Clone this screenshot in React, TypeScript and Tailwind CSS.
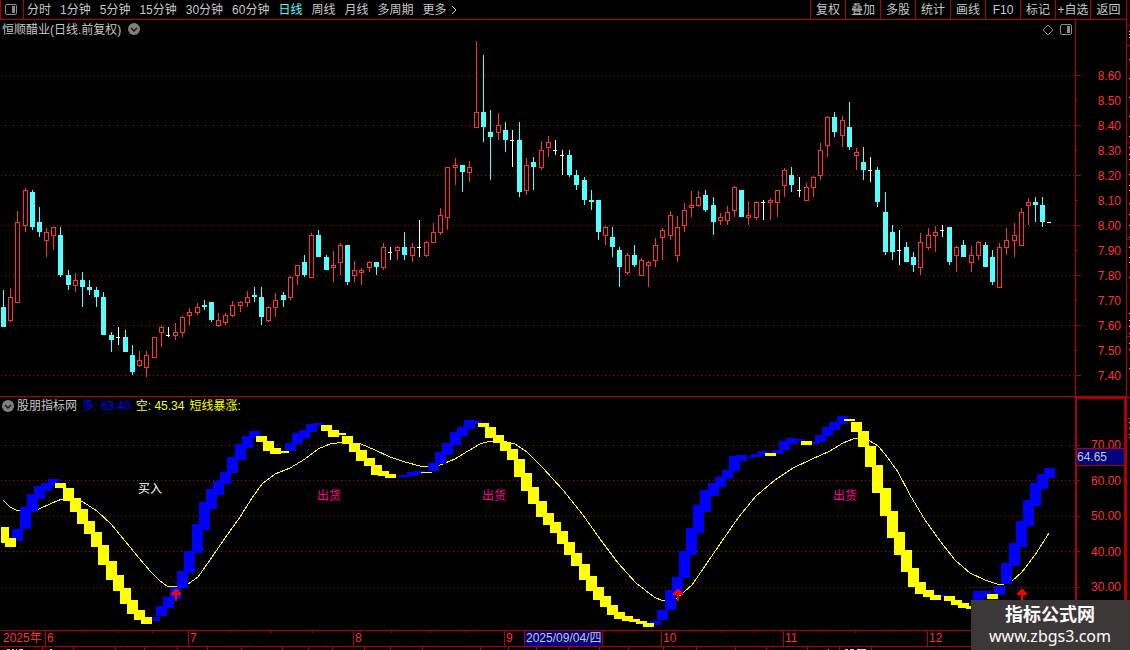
import React from "react";

type Candle = [kind: "r" | "c" | "w", high: number, top: number, bottom: number, low: number];
type Block = [color: "b" | "y", top: number, bottom: number];

const periods = ["分时", "1分钟", "5分钟", "15分钟", "30分钟", "60分钟", "日线", "周线", "月线", "多周期"];
const tools = ["复权", "叠加", "多股", "统计", "画线", "F10", "标记", "+自选", "返回"];
const prices = ["8.60", "8.50", "8.40", "8.30", "8.20", "8.10", "8.00", "7.90", "7.80", "7.70", "7.60", "7.50", "7.40"];
const levels = ["70.00", "60.00", "50.00", "40.00", "30.00"];

// r = hollow rising, c = filled falling, w = open equals close
const candles: Candle[] = [
  ["c", 290, 307, 327, 327], ["r", 288, 297, 321, 322], ["r", 211, 222, 303, 303], ["r", 188, 190, 226, 232],
  ["c", 190, 192, 227, 230], ["c", 207, 222, 232, 237], ["r", 228, 232, 241, 257], ["r", 227, 227, 236, 250],
  ["c", 227, 235, 275, 277], ["c", 270, 275, 285, 290], ["r", 273, 280, 286, 292], ["c", 272, 280, 287, 307],
  ["c", 280, 287, 290, 295], ["c", 287, 290, 297, 307], ["c", 292, 297, 335, 335], ["c", 332, 335, 340, 352],
  ["w", 327, 337, 338, 345], ["c", 330, 337, 352, 352], ["c", 345, 355, 372, 375], ["r", 351, 360, 366, 367],
  ["r", 351, 355, 368, 377], ["r", 337, 337, 358, 358], ["r", 326, 327, 333, 347], ["w", 327, 335, 336, 337],
  ["r", 323, 332, 336, 340], ["r", 316, 317, 333, 337], ["r", 308, 312, 316, 325], ["r", 303, 307, 313, 315],
  ["c", 300, 305, 307, 310], ["c", 302, 302, 320, 322], ["r", 313, 320, 326, 327], ["r", 313, 315, 323, 325],
  ["r", 301, 305, 316, 317], ["r", 301, 302, 306, 312], ["r", 291, 297, 303, 307], ["c", 287, 295, 297, 302],
  ["c", 287, 297, 317, 325], ["r", 306, 307, 321, 322], ["r", 293, 300, 308, 317], ["c", 292, 295, 300, 307],
  ["r", 276, 277, 298, 300], ["r", 265, 265, 276, 285], ["c", 255, 262, 275, 277], ["r", 233, 235, 278, 278],
  ["c", 230, 235, 257, 257], ["c", 255, 257, 270, 270], ["r", 251, 265, 268, 282], ["r", 243, 245, 263, 275],
  ["c", 245, 245, 282, 285], ["r", 261, 270, 276, 282], ["r", 268, 270, 273, 285], ["r", 261, 262, 268, 272],
  ["c", 262, 262, 267, 275], ["r", 243, 247, 268, 270], ["w", 247, 252, 253, 260], ["r", 246, 247, 251, 260],
  ["c", 232, 247, 255, 260], ["r", 243, 247, 256, 262], ["w", 220, 247, 248, 257], ["r", 241, 242, 256, 257],
  ["r", 223, 232, 243, 243], ["r", 208, 215, 233, 235], ["r", 167, 167, 218, 230], ["r", 158, 165, 168, 185],
  ["c", 165, 165, 172, 192], ["r", 161, 167, 173, 182], ["r", 41, 112, 128, 128], ["c", 55, 112, 127, 142],
  ["c", 110, 132, 137, 180], ["r", 113, 125, 133, 140], ["c", 122, 130, 140, 152], ["w", 130, 140, 141, 167],
  ["c", 122, 140, 192, 197], ["r", 158, 165, 191, 195], ["c", 157, 162, 167, 190], ["r", 141, 150, 168, 170],
  ["r", 136, 142, 148, 157], ["w", 140, 150, 151, 155], ["w", 150, 155, 156, 175], ["c", 150, 155, 175, 177],
  ["c", 170, 175, 185, 190], ["c", 177, 180, 200, 205], ["c", 190, 200, 202, 210], ["c", 200, 200, 232, 240],
  ["r", 226, 227, 236, 245], ["c", 227, 237, 247, 257], ["c", 247, 250, 267, 287], ["r", 253, 255, 273, 275],
  ["c", 245, 255, 265, 267], ["r", 258, 260, 276, 276], ["r", 261, 262, 266, 287], ["r", 238, 245, 261, 267],
  ["r", 228, 230, 238, 260], ["r", 211, 215, 236, 240], ["r", 216, 227, 256, 262], ["r", 203, 210, 226, 232],
  ["r", 191, 205, 208, 217], ["r", 191, 197, 206, 207], ["c", 190, 195, 210, 212], ["c", 197, 205, 222, 235],
  ["r", 213, 217, 221, 225], ["r", 206, 212, 221, 225], ["r", 186, 187, 211, 217], ["c", 190, 190, 217, 217],
  ["r", 201, 215, 218, 225], ["r", 201, 202, 218, 220], ["w", 200, 202, 203, 220], ["r", 198, 200, 203, 220],
  ["r", 190, 190, 203, 217], ["r", 168, 170, 186, 197], ["c", 167, 175, 185, 192], ["w", 177, 190, 191, 197],
  ["r", 183, 187, 201, 201], ["r", 176, 177, 188, 197], ["r", 143, 150, 176, 180], ["r", 116, 117, 146, 157],
  ["c", 112, 117, 132, 137], ["r", 116, 120, 136, 147], ["c", 102, 127, 147, 150], ["r", 148, 152, 156, 170],
  ["c", 147, 162, 170, 180], ["w", 157, 170, 171, 182], ["c", 167, 170, 202, 207], ["c", 192, 212, 252, 255],
  ["c", 225, 232, 252, 260], ["w", 230, 250, 251, 265], ["c", 242, 247, 262, 262], ["c", 252, 257, 265, 272],
  ["r", 233, 242, 268, 275], ["r", 228, 235, 248, 250], ["r", 226, 232, 236, 252], ["w", 225, 230, 231, 237],
  ["c", 227, 227, 262, 265], ["r", 246, 247, 256, 272], ["c", 240, 245, 257, 257], ["r", 246, 255, 263, 272],
  ["r", 241, 242, 256, 260], ["c", 242, 245, 267, 267], ["c", 250, 257, 282, 285], ["r", 243, 247, 288, 288],
  ["r", 228, 240, 248, 255], ["r", 223, 235, 241, 257], ["r", 208, 212, 246, 246], ["r", 198, 202, 206, 225],
  ["c", 197, 202, 205, 222], ["c", 197, 205, 222, 227], ["w", 222, 222, 223, 223],
];

const blocks: Block[] = [
  ["y", 527, 543], ["y", 538, 547], ["b", 529, 541], ["b", 507, 529], ["b", 494, 512], ["b", 486, 499],
  ["b", 483, 491], ["b", 479, 486], ["y", 483, 488], ["y", 488, 501], ["y", 498, 512], ["y", 509, 524],
  ["y", 521, 534], ["y", 532, 547], ["y", 545, 565], ["y", 561, 580], ["y", 575, 591], ["y", 588, 604],
  ["y", 600, 614], ["y", 610, 620], ["y", 617, 624], ["b", 617, 621], ["b", 606, 616], ["b", 597, 608],
  ["b", 587, 599], ["b", 571, 588], ["b", 551, 573], ["b", 524, 553], ["b", 502, 530], ["b", 489, 509],
  ["b", 481, 495], ["b", 472, 484], ["b", 457, 473], ["b", 444, 460], ["b", 436, 448], ["b", 431, 438],
  ["y", 436, 442], ["y", 441, 451], ["y", 448, 454], ["y", 451, 453], ["b", 443, 451], ["b", 433, 444],
  ["b", 430, 438], ["b", 424, 432], ["b", 423, 425], ["y", 425, 431], ["y", 430, 437], ["y", 433, 435],
  ["y", 436, 444], ["y", 443, 452], ["y", 450, 461], ["y", 458, 466], ["y", 465, 475], ["y", 471, 476],
  ["y", 474, 478], ["b", 476, 477], ["b", 475, 477], ["b", 472, 476], ["b", 471, 474], ["y", 472, 473],
  ["b", 463, 471], ["b", 452, 464], ["b", 443, 455], ["b", 432, 445], ["b", 427, 436], ["b", 420, 429],
  ["b", 421, 424], ["y", 423, 427], ["y", 427, 438], ["y", 435, 443], ["y", 442, 451], ["y", 449, 460],
  ["y", 459, 477], ["y", 473, 491], ["y", 487, 504], ["y", 501, 517], ["y", 513, 525], ["y", 522, 533],
  ["y", 531, 544], ["y", 542, 555], ["y", 553, 566], ["y", 564, 580], ["y", 576, 591], ["y", 587, 600],
  ["y", 596, 607], ["y", 605, 615], ["y", 612, 619], ["y", 616, 621], ["y", 619, 622], ["y", 621, 624],
  ["y", 623, 627], ["b", 621, 625], ["b", 610, 620], ["b", 590, 610], ["b", 577, 593], ["b", 551, 578],
  ["b", 528, 555], ["b", 505, 533], ["b", 490, 512], ["b", 483, 496], ["b", 477, 487], ["b", 470, 479],
  ["b", 456, 471], ["b", 455, 461], ["b", 457, 458], ["b", 454, 457], ["b", 451, 455], ["y", 453, 456],
  ["b", 450, 454], ["b", 441, 450], ["b", 438, 444], ["b", 439, 441], ["y", 441, 445], ["b", 442, 444],
  ["b", 435, 442], ["b", 427, 436], ["b", 422, 430], ["b", 416, 424], ["y", 419, 421], ["y", 422, 432],
  ["y", 431, 447], ["y", 446, 467], ["y", 465, 493], ["y", 488, 516], ["y", 511, 538], ["y", 532, 555],
  ["y", 550, 572], ["y", 568, 587], ["y", 582, 594], ["y", 590, 597], ["y", 595, 600], ["b", 595, 597],
  ["y", 596, 601], ["y", 600, 605], ["y", 603, 608], ["y", 606, 609], ["b", 591, 600], ["b", 591, 597],
  ["y", 594, 599], ["b", 586, 595], ["b", 563, 584], ["b", 543, 566], ["b", 521, 547], ["b", 500, 526],
  ["b", 483, 506], ["b", 474, 489], ["b", 468, 478],
];

const average =
  "3,500 10,507 16,510 20,511 39,509 52,503 62,499 75,499 83,502 97,511 111,524 125,541 139,558 150,571 160,581 167,586 172,587 " +
  "188,584 198,577 210,560 225,538 240,517 252,498 262,484 275,474 290,468 305,459 318,449 330,444 345,442 361,444 375,450 390,457 " +
  "405,462 420,466 430,467 440,465 455,459 468,451 480,444 490,441 503,441 515,444 527,452 543,468 563,490 583,515 600,539 " +
  "618,563 636,583 654,597 663,601 677,598 692,585 705,566 720,544 738,518 756,496 775,480 793,468 812,459 830,451 843,443 " +
  "853,439 862,438 870,441 878,446 885,454 898,472 910,495 925,520 940,541 955,560 970,573 985,580 997,584 1004,584 1012,581 1022,572 1035,555 1049,533";

const months = [
  { label: "2025年", width: "w-[45px]" },
  { label: "6", width: "w-[143px]" },
  { label: "7", width: "w-[165px]" },
  { label: "8", width: "w-[151px]" },
  { label: "9", width: "w-[157px]" },
  { label: "10", width: "w-[122px]" },
  { label: "11", width: "w-[144px]" },
  { label: "12", width: "flex-1" },
];

const weekTicks = [81, 117, 152, 229, 271, 312, 391, 429, 466, 622, 692, 722, 753, 819, 855, 891];
const tabTicks = [42, 73, 115, 144, 177, 207, 241, 282, 308, 332, 364, 390, 422, 480, 508, 536, 568, 599, 628, 663, 696, 735, 766, 807, 839, 871];
const sideLines = [25, 45, 142, 239, 336, 397, 418, 437];
const sideMarks = [31, 34, 37, 59, 78, 97, 116, 136, 147, 154, 159, 174, 185, 190, 203, 214, 225, 237, 247, 257, 262, 277, 313, 320, 326, 333, 343, 349, 368, 422, 428, 434];

const barX = (i: number) => Math.round(3 + (i * 43) / 6);

function GridLines({ rows }: { rows: number[] }) {
  return (
    <g stroke="#a01414" strokeDasharray="1 3">
      {rows.map((y) => (
        <line key={y} x1="1" x2="1075" y1={y + 0.5} y2={y + 0.5} />
      ))}
    </g>
  );
}

function CandleBar({ x, candle }: { x: number; candle: Candle }) {
  const [kind, high, top, bottom, low] = candle;
  if (kind === "w") {
    return (
      <g fill="#ffffff">
        <rect x={x} y={high} width="1" height={low - high} />
        <rect x={x - 2} y={top} width="4" height="1" />
      </g>
    );
  }
  if (kind === "c") {
    return (
      <g fill="#54ffff">
        <rect x={x} y={high} width="1" height={low - high} />
        <rect x={x - 2} y={top} width="5" height={bottom - top} />
      </g>
    );
  }
  return (
    <g fill="#ff3232">
      <rect x={x} y={high} width="1" height={low - high} />
      <rect x={x - 2} y={top} width="5" height={bottom - top} />
      <rect x={x - 1} y={top + 1} width="3" height={bottom - top - 2} fill="#000000" />
    </g>
  );
}

function PriceChart() {
  return (
    <svg viewBox="0 20 1075 376" preserveAspectRatio="xMinYMin meet" shapeRendering="crispEdges" className="block h-full w-full">
      <GridLines rows={[75, 125, 175, 225, 275, 325, 375]} />
      {candles.map((candle, i) => (
        <CandleBar key={i} x={barX(i)} candle={candle} />
      ))}
    </svg>
  );
}

function Blocks({ color }: { color: "b" | "y" }) {
  return (
    <g fill={color === "b" ? "#0000ff" : "#ffff00"}>
      {blocks.map(([kind, top, bottom], i) =>
        kind === color ? (
          <rect
            key={i}
            x={i === 0 ? 1 : barX(i) - 5}
            y={top}
            width={i === 0 ? 8 : 11}
            height={bottom - top}
          />
        ) : null
      )}
    </g>
  );
}

function IndicatorChart() {
  return (
    <svg viewBox="0 397 1075 233" preserveAspectRatio="xMinYMin meet" shapeRendering="crispEdges" className="block h-full w-full">
      <GridLines rows={[445, 480, 516, 551, 587]} />
      <polyline points={average} fill="none" stroke="#ffff00" />
      <Blocks color="b" />
      <Blocks color="y" />
      {[176, 678, 1022].map((x) => (
        <path key={x} d={`M${x} 589h1v1h1v1h1v1h1v1h1v2h-4v6h-2v-6h-4v-2h1v-1h1v-1h1v-1h1v-1h1z`} fill="#ff0000" />
      ))}
      <g fontSize="12">
        <text x="138" y="493" fill="#ffffff">买入</text>
        {[317, 482, 833].map((x) => (
          <text key={x} x={x} y="500" fill="#ff0096">出货</text>
        ))}
      </g>
    </svg>
  );
}

function PanelIcon() {
  return (
    <svg width="12" height="12" viewBox="0 0 12 12" fill="none">
      <rect x="0.5" y="0.5" width="11" height="10" rx="1.5" stroke="#8c8c8c" />
      <rect x="7" y="2" width="3" height="7" fill="#8c8c8c" />
    </svg>
  );
}

function DropIcon() {
  return (
    <svg width="12" height="12" viewBox="0 0 12 12" fill="none">
      <circle cx="6" cy="6" r="6" fill="#808080" />
      <path d="M3 5l3 3 3-3" stroke="#101010" strokeWidth="1.4" />
    </svg>
  );
}

function Header() {
  return (
    <header className="flex h-5 shrink-0 border-b border-l border-[#b00000] leading-[18px] text-[#c8c8c8]">
      <button aria-label="侧栏" className="flex w-[23px] items-center border-r border-[#b00000] pl-1">
        <PanelIcon />
      </button>
      <nav className="ml-[3px] flex flex-1 gap-[9px] whitespace-nowrap">
        {periods.map((name) => (
          <button key={name} className={name === "日线" ? "text-[#54ffff]" : ""}>
            {name}
          </button>
        ))}
        <button className="flex items-center gap-1">
          更多
          <svg width="6" height="10" viewBox="0 0 6 10" fill="none" stroke="#c8c8c8">
            <path d="M1 1l4 4-4 4" />
          </svg>
        </button>
      </nav>
      <div className="flex">
        {tools.map((name) => (
          <button
            key={name}
            className="w-[35px] whitespace-nowrap border-l border-[#b00000] text-center last:w-9"
          >
            {name}
          </button>
        ))}
      </div>
    </header>
  );
}

function PricePane() {
  return (
    <section className="flex h-[377px] shrink-0 border-b border-[#b00000]">
      <div className="relative min-w-0 flex-1">
        <PriceChart />
        <div className="absolute left-0.5 top-0 flex h-5 items-center gap-[7px] text-[#c8c8c8]">
          <h1>恒顺醋业(日线.前复权)</h1>
          <button aria-label="切换" className="-mt-0.5">
            <DropIcon />
          </button>
        </div>
        <div className="absolute right-[3px] top-1 flex gap-1.5">
          <svg width="12" height="12" viewBox="0 0 12 12" fill="none" stroke="#8c8c8c">
            <path d="M6 1l5 5-5 5-5-5z" />
          </svg>
          <PanelIcon />
        </div>
      </div>
      <div className="w-[51px] border-l border-[#b00000] pt-[43px] text-[#ff3232]">
        {prices.map((price, i) => (
          <div key={price} className="flex h-[25px] items-center justify-between pr-[5px]">
            <span className={`h-px bg-[#b00000] ${i % 2 === 0 ? "w-[5px]" : "w-0.5"}`} />
            {price}
          </div>
        ))}
      </div>
    </section>
  );
}

function IndicatorPane() {
  return (
    <section className="flex min-h-0 flex-1">
      <div className="relative min-w-0 flex-1">
        <IndicatorChart />
        <div className="absolute left-0.5 top-0 flex h-[17px] items-center gap-[5px] whitespace-nowrap">
          <button aria-label="指标" className="-mr-0.5">
            <DropIcon />
          </button>
          <h2 className="text-[#c8c8c8]">股朋指标网</h2>
          <span className="text-[#0000ff]">多: 63.40</span>
          <span className="text-[#ffff00]">空: 45.34</span>
          <span className="text-[#ffff00]">短线暴涨:</span>
        </div>
      </div>
      <div className="relative w-[51px] border-2 border-b-0 border-[#b00000] pt-[39px] text-[#ff3232]">
        <div className="flex h-[156px] flex-col justify-between leading-[14px]">
          {levels.map((level) => (
            <div key={level} className="flex items-center justify-between pr-[3px]">
              <span className="h-px w-[3px] bg-[#b00000]" />
              {level}
            </div>
          ))}
        </div>
        <div className="absolute inset-x-0 top-[49px] h-[18px] border-y border-[#b00000] bg-[#000080] leading-4 text-[#c8c8c8]">
          64.65
        </div>
      </div>
    </section>
  );
}

function DateAxis() {
  return (
    <div className="relative flex h-4 shrink-0 border-t border-[#b00000] leading-[15px] text-[#ff3232]">
      {months.map(({ label, width }, i) => (
        <div key={label} className={`${width} ${i === 0 ? "pl-[3px]" : "border-l border-[#b00000] pl-px"}`}>
          {label}
        </div>
      ))}
      <svg width="1075" height="2" className="absolute left-0 top-0" fill="#b00000">
        {weekTicks.map((x) => (
          <rect key={x} x={x} y="0" width="1" height="2" />
        ))}
      </svg>
      <div className="absolute left-[524px] top-0 h-[15px] whitespace-nowrap border-x border-[#b00000] bg-[#000080] px-px text-[#c8c8c8]">
        2025/09/04/四
      </div>
    </div>
  );
}

function TabEdge() {
  return (
    <div className="h-1 shrink-0 border-t border-[#b00000]">
      <svg width="1075" height="3" className="block" shapeRendering="crispEdges">
        {tabTicks.map((x) => (
          <rect key={x} x={x} y="0" width="1" height="3" fill="#b00000" />
        ))}
        <path d="M7 2.5h3M12 2.5h2M16 2.5h1M19 2.5h4M50 2.5h2M828 2.5h1" stroke="#c8c8c8" />
        <path d="M845 2.5h3M850 2.5h4M857 2.5h9" stroke="#54ffff" />
      </svg>
    </div>
  );
}

export default function App() {
  return (
    <div className="relative flex h-screen min-h-[650px] overflow-hidden bg-black font-['Liberation_Sans','Noto_Sans_CJK_SC',sans-serif] text-[12px]">
      <main className="flex min-w-0 flex-1 flex-col">
        <Header />
        <PricePane />
        <IndicatorPane />
        <DateAxis />
        <TabEdge />
      </main>
      <aside className="w-1 shrink-0 border-l border-[#b00000]">
        <svg width="3" height="650" shapeRendering="crispEdges">
          {sideLines.map((y) => (
            <rect key={y} y={y} width="3" height="1" fill="#b00000" />
          ))}
          {sideMarks.map((y) => (
            <rect key={y} x="2" y={y} width="1" height="1" fill="#c8c8c8" />
          ))}
        </svg>
      </aside>
      <a
        href="#"
        className="absolute bottom-0 right-0 flex h-[50px] w-[159px] flex-col items-center bg-[#3c3838] pr-px pt-1 text-white"
      >
        <span className="text-[18px] font-bold leading-[22px]">指标公式网</span>
        <span className="font-['Noto_Sans',sans-serif] text-[16px] leading-5">www.zbgs3.com</span>
      </a>
    </div>
  );
}
